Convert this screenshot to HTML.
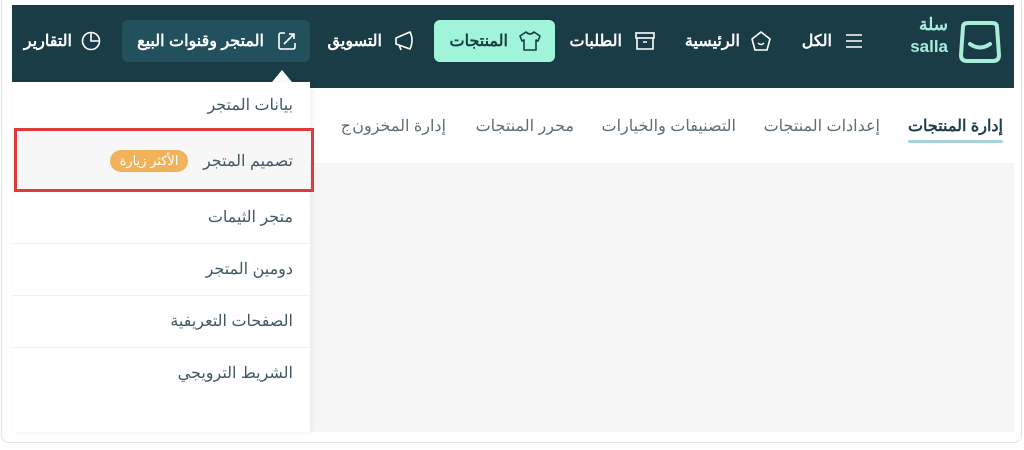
<!DOCTYPE html>
<html><head><meta charset="utf-8"><style>
*{margin:0;padding:0;box-sizing:border-box}
body{width:1024px;height:450px;background:#fff;position:relative;overflow:hidden;font-family:"Liberation Sans","Noto Sans CJK SC",sans-serif}
.card{position:absolute;left:1px;top:-6px;width:1021px;height:449px;border:1px solid #e4e4e4;border-radius:8px;background:#fff}
.hdr{position:absolute;left:12px;top:5px;width:1002px;height:83px;background:#1a3c47}
.it{position:absolute;top:31px;color:#fff;font-weight:bold;font-size:16px;direction:rtl;white-space:nowrap;line-height:22px}
.btn{position:absolute;top:20px;height:42px;border-radius:6px}
svg{position:absolute}
.tabs{position:absolute;top:116px;font-size:16px;color:#5c6f75;direction:rtl;white-space:nowrap}
.gray{position:absolute;left:310px;top:163px;width:704px;height:269px;background:#f6f6f6}
.dd{position:absolute;left:12px;top:82px;width:298px;height:350px;background:#fff;box-shadow:2px 0 6px rgba(0,0,0,.06)}
.di{position:absolute;right:17px;font-size:16px;color:#3f5a62;direction:rtl;white-space:nowrap}
.sep{position:absolute;left:0;width:298px;height:1px;background:#f0f0f0}
</style></head><body>
<div class="card"></div>
<div class="hdr"></div>
<svg style="left:955px;top:20px" width="50" height="44" viewBox="0 0 50 44"><path d="M8 7 Q8 3 13 3 H37 Q42 3 42 7 L44 35 Q44 41 38 41 H12 Q6 41 6 35 Z" fill="none" stroke="#a9ecd9" stroke-width="4"/><path d="M15 24 Q25 31 35 24" fill="none" stroke="#a9ecd9" stroke-width="4" stroke-linecap="round"/></svg>
<div class="it" style="right:76px;top:16px;font-size:17px;line-height:18px;color:#a9ecd9">سلة</div>
<div style="position:absolute;right:76px;top:37px;color:#a9ecd9;font-weight:bold;font-size:17px">salla</div>
<svg style="left:844px;top:32px" width="20" height="18"><path d="M2 3H18M2 9H18M2 15H18" stroke="#fff" stroke-width="1.6"/></svg>
<div class="it" style="right:192px">الكل</div>
<svg style="left:750px;top:30px" width="22" height="22"><path d="M11 2 L20 9 L17 20 H5 L2 9 Z" fill="none" stroke="#fff" stroke-width="1.6" stroke-linejoin="round"/><path d="M8 13 Q11 16 14 13" stroke="#fff" stroke-width="1.4" fill="none"/></svg>
<div class="it" style="right:284px">الرئيسية</div>
<svg style="left:634px;top:30px" width="22" height="22"><rect x="2" y="3" width="18" height="5" fill="none" stroke="#fff" stroke-width="1.6"/><path d="M3 8V19H19V8M9 12H13" fill="none" stroke="#fff" stroke-width="1.6"/></svg>
<div class="it" style="right:402px">الطلبات</div>
<div class="btn" style="left:434px;width:121px;background:#9ff4da"></div>
<svg style="left:518px;top:30px" width="24" height="22"><path d="M8 2 L2 6 L4 11 L6 10 V20 H18 V10 L20 11 L22 6 L16 2 Q12 6 8 2Z" fill="none" stroke="#1a3c47" stroke-width="1.6" stroke-linejoin="round"/></svg>
<div class="it" style="right:516px;color:#1a3c47">المنتجات</div>
<svg style="left:392px;top:30px" width="24" height="22"><path d="M4 8 L18 2 Q22 10 18 19 L4 14 Z M7 15 L9 20" fill="none" stroke="#fff" stroke-width="1.6" stroke-linejoin="round"/></svg>
<div class="it" style="right:642px">التسويق</div>
<div class="btn" style="left:122px;width:188px;background:#22505c"></div>
<svg style="left:276px;top:30px" width="22" height="22"><path d="M9 3H5Q3 3 3 5V17Q3 19 5 19H17Q19 19 19 17V13M8 14 L18 4M13 4H18V9" fill="none" stroke="#fff" stroke-width="1.6"/></svg>
<div class="it" style="right:760px">المتجر وقنوات البيع</div>
<svg style="left:80px;top:30px" width="22" height="22"><circle cx="11" cy="11" r="8.5" fill="none" stroke="#fff" stroke-width="1.6"/><path d="M11 3V11H19" fill="none" stroke="#fff" stroke-width="1.6"/></svg>
<div class="it" style="right:952px">التقارير</div>
<div class="gray"></div>
<div class="tabs" style="right:21px;color:#1f3f48;font-weight:bold">إدارة المنتجات</div>
<div style="position:absolute;left:908px;top:140px;width:95px;height:3px;background:#a6d3d9;border-radius:2px"></div>
<div class="tabs" style="right:144px">إعدادات المنتجات</div>
<div class="tabs" style="right:288px">التصنيفات والخيارات</div>
<div class="tabs" style="right:450px">محرر المنتجات</div>
<div class="tabs" style="right:578px">إدارة المخزون</div>
<div class="tabs" style="right:673px">ج</div>
<div style="position:absolute;left:272px;top:70px;width:0;height:0;border-left:10px solid transparent;border-right:10px solid transparent;border-bottom:12px solid #fff"></div>
<div class="dd">
<div class="di" style="top:13px">بيانات المتجر</div>
<div style="position:absolute;left:0;top:46px;width:298px;height:64px;background:#f7f7f7"></div>
<div class="di" style="top:69px">تصميم المتجر</div>
<div style="position:absolute;left:98px;top:68px;width:78px;height:22px;border-radius:11px;background:#f0b25a;color:#fff;font-size:13px;text-align:center;line-height:22px;direction:rtl">الأكثر زيارة</div>
<div class="di" style="top:125px">متجر الثيمات</div>
<div class="sep" style="top:161px"></div>
<div class="di" style="top:177px">دومين المتجر</div>
<div class="sep" style="top:213px"></div>
<div class="di" style="top:229px">الصفحات التعريفية</div>
<div class="sep" style="top:265px"></div>
<div class="di" style="top:281px">الشريط الترويجي</div>
</div>
<div style="position:absolute;left:14px;top:128px;width:300px;height:64px;border:3px solid #e03a3a"></div>
</body></html>
